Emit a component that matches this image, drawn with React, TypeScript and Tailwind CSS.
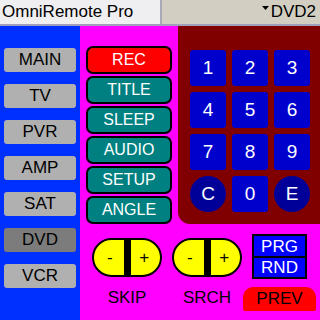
import React from 'react';

const SOURCES = ['MAIN', 'TV', 'PVR', 'AMP', 'SAT', 'DVD', 'VCR'];
const FUNCS = ['REC', 'TITLE', 'SLEEP', 'AUDIO', 'SETUP', 'ANGLE'];
const KEYS = ['1', '2', '3', '4', '5', '6', '7', '8', '9', 'C', '0', 'E'];

const Rocker = ({ label }: { label: string }) => (
  <div className="flex w-[70px] shrink-0 flex-col items-center">
    <div className="flex h-[39px] w-[70px] overflow-hidden rounded-full border-2 border-black bg-[#ffff00] text-[17px] leading-none text-black">
      <div className="flex flex-1 items-center justify-center pl-[2px]">-</div>
      <div className="w-[7px] bg-black" />
      <div className="flex flex-1 items-center justify-center pr-[2px]">+</div>
    </div>
    <div className="mt-[12px] text-[17px] leading-none text-black">{label}</div>
  </div>
);

export default function App() {
  return (
    <div className="flex h-[320px] w-[320px] flex-col overflow-hidden font-['Liberation_Sans',sans-serif]">
      {/* title bar */}
      <div className="flex h-[26px] shrink-0 border-b-2 border-[#a0a0bc]">
        <div className="flex w-[160px] items-center bg-[#efeef0] pl-[2px] text-[17px] text-black">
          OmniRemote Pro
        </div>
        <div className="w-[2px] bg-[#a8a8b8]" />
        <div className="flex flex-1 items-center justify-end gap-[2px] bg-[#d2cfc2] pr-[4px] text-[17px] text-black">
          <svg width="7" height="4" viewBox="0 0 7 4" className="mb-[9px]">
            <path d="M0 0H7L3.5 4Z" fill="black" />
          </svg>
          DVD2
        </div>
      </div>

      <div className="flex flex-1">
        {/* sources */}
        <div className="flex w-[80px] shrink-0 flex-col gap-[12px] bg-[#0030ff] px-[4px] pt-[22px]">
          {SOURCES.map((s) => (
            <div
              key={s}
              className={`flex h-[24px] items-center justify-center rounded-[3px] text-[17px] text-black ${
                s === 'DVD' ? 'bg-[#7c7c7c]' : 'bg-[#b0b0b0]'
              }`}
            >
              {s}
            </div>
          ))}
        </div>

        <div className="flex w-[240px] flex-col bg-[#ff00ff]">
          <div className="flex">
            <div className="flex w-[98px] shrink-0 flex-col gap-[2px] px-[6px] pt-[20px]">
              {FUNCS.map((f) => (
                <div
                  key={f}
                  className={`flex h-[28px] items-center justify-center rounded-[7px] border-2 border-black text-[16px] text-white ${
                    f === 'REC' ? 'bg-[#ff0000]' : 'bg-[#008080]'
                  }`}
                >
                  {f}
                </div>
              ))}
            </div>
            <div className="grid h-[198px] w-[142px] grid-cols-[36px_36px_36px] grid-rows-[36px_36px_36px_36px] gap-[6px] rounded-bl-[12px] bg-[#800000] pl-[12px] pt-[24px]">
              {KEYS.map((k) => (
                <div
                  key={k}
                  className={`flex items-center justify-center text-[19px] text-white ${
                    k === 'C' || k === 'E' ? 'rounded-full bg-[#000099]' : 'rounded-[3px] bg-[#0000cc]'
                  }`}
                >
                  {k}
                </div>
              ))}
            </div>
          </div>

          {/* bottom controls */}
          <div className="flex pl-[12px]">
            <div className="pt-[14px]">
              <Rocker label="SKIP" />
            </div>
            <div className="ml-[10px] pt-[14px]">
              <Rocker label="SRCH" />
            </div>
            <div className="ml-[1px] flex w-[73px] shrink-0 flex-col items-center pt-[10px]">
              <div className="flex w-[55px] flex-col border-2 border-black bg-black text-[17px] leading-none text-white">
                <div className="flex h-[20px] items-center justify-center bg-[#0000ff]">PRG</div>
                <div className="mt-[2px] flex h-[19px] items-center justify-center bg-[#0000ff]">RND</div>
              </div>
              <div className="mt-[8px] flex h-[24px] w-[73px] items-center justify-center rounded-t-[10px] rounded-b-[2px] bg-[#ff0000] text-[17px] text-black">
                PREV
              </div>
            </div>
          </div>
        </div>
      </div>
    </div>
  );
}
